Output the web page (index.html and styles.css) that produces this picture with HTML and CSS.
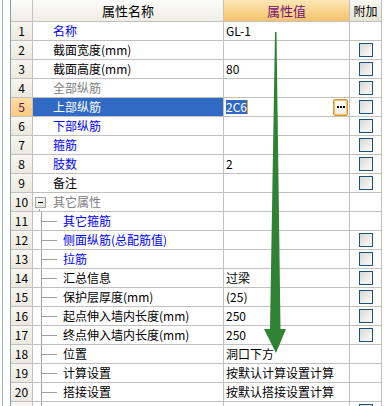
FILE: index.html
```html
<!DOCTYPE html>
<html>
<head>
<meta charset="utf-8">
<link rel="stylesheet" href="styles.css">
</head>
<body>
<div class="frame">
  <div class="edge"></div>
  <div class="grid">
    <div class="hd corner"></div>
    <div class="hd hname">属性名称</div>
    <div class="hd hval">属性值</div>
    <div class="hd hext">附加</div>

    <div class="num">1</div><div class="name blue">名称</div><div class="val">GL-1</div><div class="ext"></div>
    <div class="num">2</div><div class="name">截面宽度(mm)</div><div class="val"></div><div class="ext"><span class="cb"></span></div>
    <div class="num">3</div><div class="name">截面高度(mm)</div><div class="val">80</div><div class="ext"><span class="cb"></span></div>
    <div class="num">4</div><div class="name grey">全部纵筋</div><div class="val"></div><div class="ext"><span class="cb"></span></div>
    <div class="num cur">5</div><div class="name sel">上部纵筋</div><div class="val edit"><span class="hl">2C6</span><span class="dots"><i></i><i></i><i></i></span></div><div class="ext"><span class="cb"></span></div>
    <div class="num">6</div><div class="name blue">下部纵筋</div><div class="val"></div><div class="ext"><span class="cb"></span></div>
    <div class="num">7</div><div class="name blue">箍筋</div><div class="val"></div><div class="ext"><span class="cb"></span></div>
    <div class="num">8</div><div class="name blue">肢数</div><div class="val">2</div><div class="ext"><span class="cb"></span></div>
    <div class="num">9</div><div class="name">备注</div><div class="val"></div><div class="ext"><span class="cb"></span></div>
    <div class="num">10</div><div class="name group grey"><span class="toggle"></span>其它属性</div><div class="val"></div><div class="ext"></div>
    <div class="num">11</div><div class="name child blue">其它箍筋</div><div class="val"></div><div class="ext"></div>
    <div class="num">12</div><div class="name child blue">侧面纵筋(总配筋值)</div><div class="val"></div><div class="ext"><span class="cb"></span></div>
    <div class="num">13</div><div class="name child blue">拉筋</div><div class="val"></div><div class="ext"><span class="cb"></span></div>
    <div class="num">14</div><div class="name child">汇总信息</div><div class="val">过梁</div><div class="ext"><span class="cb"></span></div>
    <div class="num">15</div><div class="name child">保护层厚度(mm)</div><div class="val">(25)</div><div class="ext"><span class="cb"></span></div>
    <div class="num">16</div><div class="name child">起点伸入墙内长度(mm)</div><div class="val">250</div><div class="ext"><span class="cb"></span></div>
    <div class="num">17</div><div class="name child">终点伸入墙内长度(mm)</div><div class="val">250</div><div class="ext"><span class="cb"></span></div>
    <div class="num">18</div><div class="name child">位置</div><div class="val">洞口下方</div><div class="ext"></div>
    <div class="num">19</div><div class="name child">计算设置</div><div class="val">按默认计算设置计算</div><div class="ext"></div>
    <div class="num">20</div><div class="name child">搭接设置</div><div class="val">按默认搭接设置计算</div><div class="ext"></div>
    <div class="num"></div><div class="name child"></div><div class="val low">混凝土C30</div><div class="ext"><span class="cb"></span></div>
  </div>
</div>
<svg class="arrow" width="387" height="406" viewBox="0 0 387 406">
  <polygon points="275,32 276.5,32 280.5,329 286,329 276,353 264,329 270,329" fill="#2f8134"/>
</svg>
</body>
</html>
```

FILE: styles.css
```css
html, body {
  margin: 0;
  padding: 0;
}
body {
  width: 387px;
  height: 406px;
  overflow: hidden;
  background: #ffffff;
  font-family: "Noto Sans CJK SC", "Liberation Sans", sans-serif;
  font-size: 12px;
  color: #000000;
  position: relative;
}
.frame {
  display: flex;
  height: 406px;
}
.edge {
  width: 7px;
  margin-left: 2px;
  border-left: 1px solid #a3b0c2;
  border-right: 1px solid #8a9bb0;
  flex: none;
}
.grid {
  display: grid;
  grid-template-columns: 22px 191px 126px 32px;
  grid-template-rows: 22px;
  grid-auto-rows: 19px;
  align-content: start;
}
.grid > div {
  box-sizing: border-box;
  border-right: 1px solid #c0c0c0;
  border-bottom: 1px solid #c0c0c0;
  line-height: 18px;
  white-space: nowrap;
  overflow: hidden;
}
.hd {
  display: flex;
  align-items: center;
  justify-content: center;
  font-size: 13px;
  background: linear-gradient(#fcfcfa, #efede4);
}
.hval {
  background: linear-gradient(#fde6b6, #f5c46a);
  color: #7a0f78;
}
.hext {
  background: linear-gradient(#f8f7f1, #e6e3d6);
  font-size: 12px;
}
.num {
  display: flex;
  align-items: center;
  justify-content: center;
  background: linear-gradient(#f7f6f0, #ebe9df);
  font-size: 12px;
}
.num.cur {
  background: linear-gradient(#ffdca4, #fcca7c);
  color: #5a1060;
}
.name {
  display: flex;
  align-items: center;
  padding-left: 20px;
}
.blue { color: #0000ff; }
.grey { color: #808080; }
.sel {
  background: #316ac5;
  color: #ffffff;
}
.group {
  padding-left: 2px;
  background-image: linear-gradient(#a0a0a0, #a0a0a0);
  background-repeat: no-repeat;
  background-size: 1px 2px;
  background-position: 6px 100%;
}
.toggle {
  width: 11px;
  height: 11px;
  box-sizing: border-box;
  border: 1px solid #a4a4a4;
  background: linear-gradient(135deg, #ffffff, #dcdcd4);
  margin-right: 7px;
  position: relative;
  flex: none;
}
.toggle::after {
  content: "";
  position: absolute;
  left: 2px;
  top: 4px;
  width: 5px;
  height: 1px;
  background: #000000;
}
.child {
  padding-left: 30px;
  background-image: linear-gradient(#a0a0a0, #a0a0a0), linear-gradient(#a0a0a0, #a0a0a0);
  background-repeat: no-repeat;
  background-size: 1px 100%, 15px 1px;
  background-position: 8px 0, 9px 50%;
}
.val {
  display: flex;
  align-items: center;
  padding-left: 2px;
}
.low {
  align-items: flex-end;
  line-height: 12px;
  margin-bottom: -8px;
}
.edit .hl {
  background: #316ac5;
  color: #ffffff;
  border-right: 1px solid #f0a020;
  line-height: 14px;
}
.dots {
  margin-left: auto;
  margin-right: 1px;
  width: 15px;
  height: 17px;
  box-sizing: border-box;
  border: 1px solid #d9982b;
  border-radius: 2px;
  background: linear-gradient(#ffffff, #ecebe6);
  box-shadow: inset 0 0 0 1px #f6c060;
  display: flex;
  align-items: center;
  justify-content: center;
  gap: 1px;
}
.dots i {
  width: 2px;
  height: 2px;
  background: #000000;
}
.ext {
  display: flex;
  align-items: center;
  justify-content: center;
}
.cb {
  width: 14px;
  height: 14px;
  box-sizing: border-box;
  border: 1px solid #1c5180;
  background: linear-gradient(135deg, #d9d9d3, #fcfcfa);
  margin-left: 1px;
}
.arrow {
  position: absolute;
  left: 0;
  top: 0;
  pointer-events: none;
}
```
